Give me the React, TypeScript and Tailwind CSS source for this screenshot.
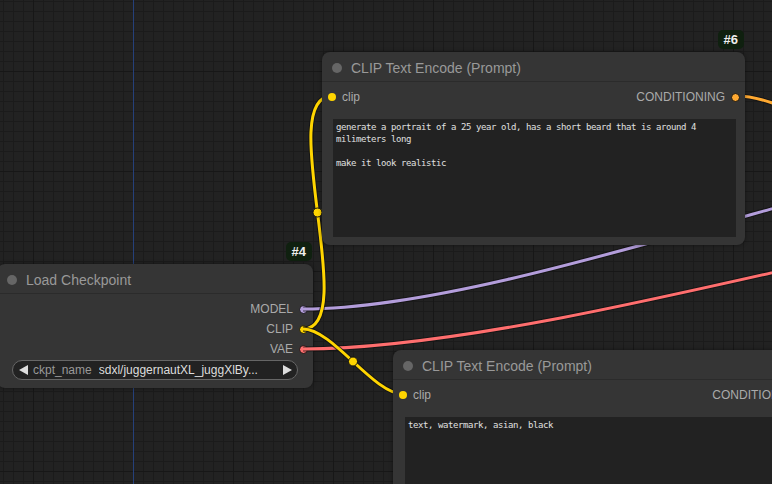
import React from 'react';

const UI = "font-['Liberation_Sans',Arial,sans-serif]";
const MONO = "font-['DejaVu_Sans_Mono','Liberation_Mono',monospace]";

function Badge({ label }: { label: string }) {
  return (
    <div className="absolute -top-[22px] right-[1px] h-[19px] px-[6px] rounded-[5px] bg-[#0f200f] flex items-center text-[13px] font-bold text-[#eee]">
      {label}
    </div>
  );
}

function NodeTitle({ title }: { title: string }) {
  return (
    <div className="h-[30px] flex items-center pt-[3px] pl-[10px] gap-[9px] border-b border-[#2b2b2b]">
      <div className="w-[10px] h-[10px] rounded-full bg-[#666]" />
      <span className="text-[14px] text-[#999] whitespace-nowrap">{title}</span>
    </div>
  );
}

function OutDot({ color }: { color: string }) {
  return <div className={`w-[9px] h-[9px] rounded-full border border-[#151515] ${color}`} />;
}

function Output({ label, color }: { label: string; color: string }) {
  return (
    <div className="h-5 flex items-center justify-end gap-[6px] pr-[5px]">
      <span className="text-[12px] text-[#aaa]">{label}</span>
      <OutDot color={color} />
    </div>
  );
}

function ClipRow() {
  return (
    <div className="mt-[5px] h-5 flex items-center justify-between pl-[6px] pr-[5px] text-[12px] text-[#aaa]">
      <div className="flex items-center gap-[6px]">
        <div className="w-2 h-2 rounded-full bg-[#ffd500]" />
        <span>clip</span>
      </div>
      <div className="flex items-center gap-[6px]">
        <span>CONDITIONING</span>
        <OutDot color="bg-[#ffa931]" />
      </div>
    </div>
  );
}

function Prompt({ text, className }: { text: string; className: string }) {
  return (
    <div
      className={`mt-[12px] h-[118px] bg-[#222] px-[3px] pt-[2px] text-[9px] tracking-[-0.42px] leading-[12px] text-[#e0e0e0] whitespace-pre-wrap ${MONO} ${className}`}
    >
      {text}
    </div>
  );
}

function Wire({ d, color }: { d: string; color: string }) {
  return (
    <g fill="none">
      <path d={d} stroke="#111" strokeOpacity={0.75} strokeWidth={5} />
      <path d={d} stroke={color} strokeWidth={3} />
    </g>
  );
}

export default function App() {
  return (
    <div className={`relative w-[772px] h-[484px] overflow-hidden bg-[#222] ${UI}`}>
      {/* canvas grid */}
      <svg className="absolute inset-0" width={772} height={484}>
        <defs>
          <pattern id="minor" width="10" height="10" patternUnits="userSpaceOnUse" x="3" y="1">
            <rect width="10" height="1" fill="#1b1b1b" />
            <rect width="1" height="10" fill="#1b1b1b" />
          </pattern>
          <pattern id="major" width="100" height="100" patternUnits="userSpaceOnUse" x="33" y="71">
            <rect width="100" height="1" fill="#171717" />
            <rect width="1" height="100" fill="#171717" />
          </pattern>
        </defs>
        <rect width="772" height="484" fill="url(#minor)" />
        <rect width="772" height="484" fill="url(#major)" />
        <rect x="133" y="0" width="1" height="484" fill="#25407a" />
      </svg>

      {/* Load Checkpoint */}
      <div className="absolute left-[-3px] top-[264px] w-[316px] h-[124px] rounded-[8px] bg-[#353535] shadow-[0_0_4px_rgba(0,0,0,0.45)]">
        <Badge label="#4" />
        <NodeTitle title="Load Checkpoint" />
        <div className="mt-[5px]">
          <Output label="MODEL" color="bg-[#b39ddb]" />
          <Output label="CLIP" color="bg-[#ffd500]" />
          <Output label="VAE" color="bg-[#ff6e6e]" />
        </div>
        <div className="mt-[1px] mx-[15px] h-5 rounded-full border border-[#666] bg-[#222] flex items-center pl-[6px] pr-[5px] text-[12px]">
          <svg width="9" height="10" viewBox="0 0 9 10">
            <polygon points="9,0 9,10 0,5" fill="#ddd" />
          </svg>
          <span className="ml-[5px] text-[#999]">ckpt_name</span>
          <span className="ml-[7px] flex-1 min-w-0 truncate text-[#ddd]">sdxl/juggernautXL_juggXlBy...</span>
          <svg width="9" height="10" viewBox="0 0 9 10">
            <polygon points="0,0 0,10 9,5" fill="#ddd" />
          </svg>
        </div>
      </div>

      {/* links */}
      <svg className="absolute inset-0 pointer-events-none" width={772} height={484}>
        <Wire d="M303 349 C581 349 1122 160 1400 160" color="#ff6e6e" />
        <Wire d="M303 309 C532 309 971 120 1200 120" color="#b39ddb" />
        <Wire d="M736 96 C840 96 996 300 1100 300" color="#ffa931" />
        <Wire d="M303 329 C361.7 329 273.3 96 332 96" color="#ffd500" />
        <Wire d="M303 329 C332.8 329 373.2 394 403 394" color="#ffd500" />
        <circle cx="317.5" cy="212.5" r="4.5" fill="#ffd500" stroke="#111" strokeWidth="1" />
        <circle cx="353" cy="361.5" r="4.5" fill="#ffd500" stroke="#111" strokeWidth="1" />
      </svg>

      {/* CLIP Text Encode #6 */}
      <div className="absolute left-[322px] top-[52px] w-[423px] h-[193px] rounded-[8px] bg-[#353535] shadow-[0_0_4px_rgba(0,0,0,0.45)]">
        <Badge label="#6" />
        <NodeTitle title="CLIP Text Encode (Prompt)" />
        <ClipRow />
        <Prompt
          className="ml-[11px] mr-[9px]"
          text={'generate a portrait of a 25 year old, has a short beard that is around 4\nmilimeters long\n\nmake it look realistic'}
        />
      </div>

      {/* CLIP Text Encode (negative) */}
      <div className="absolute left-[393px] top-[350px] w-[428px] h-[200px] rounded-[8px] bg-[#353535] shadow-[0_0_4px_rgba(0,0,0,0.45)]">
        <NodeTitle title="CLIP Text Encode (Prompt)" />
        <ClipRow />
        <Prompt className="ml-[12px] mr-[9px]" text="text, watermark, asian, black" />
      </div>
    </div>
  );
}
